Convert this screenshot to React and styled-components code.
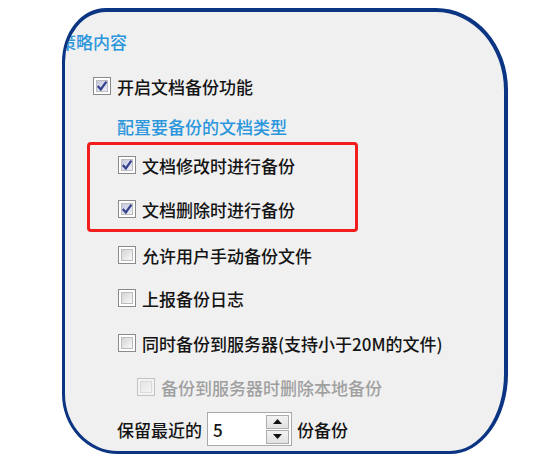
import React from 'react';
import styled, { createGlobalStyle } from 'styled-components';

const GlobalStyle = createGlobalStyle`
  html, body {
    margin: 0;
    padding: 0;
    background: #ffffff;
  }
  body {
    font-family: 'Noto Sans CJK SC', 'Noto Sans', 'Liberation Sans', sans-serif;
  }
`;

const Page = styled.div`
  width: 556px;
  height: 469px;
  box-sizing: border-box;
  padding: 8px 0 0 62px;
  overflow: hidden;
`;

const Panel = styled.div`
  width: 446px;
  height: 446px;
  box-sizing: border-box;
  background: #f0f0f0;
  border-style: solid;
  border-color: #0b3583;
  border-width: 4px 4px 3px 3px;
  border-top-left-radius: 44px 54px;
  border-top-right-radius: 72px 82px;
  border-bottom-right-radius: 58px 80px;
  border-bottom-left-radius: 56px 60px;
  overflow: hidden;
  padding: 19px 0 0 28px;
  display: flex;
  flex-direction: column;
  align-items: flex-start;
`;

const Heading = styled.div`
  font-size: 17px;
  font-weight: 500;
  line-height: 22px;
  height: 22px;
  color: #2b96dc;
  margin-left: ${p => p.$indent || 0}px;
  margin-top: ${p => p.$top || 0}px;
  white-space: nowrap;
`;

const Row = styled.div`
  display: flex;
  align-items: center;
  gap: ${p => p.$gap || 6}px;
  height: ${p => p.$height || 22}px;
  margin-top: ${p => p.$top || 0}px;
  margin-left: ${p => p.$indent || 0}px;
  font-size: 17px;
  font-weight: 500;
  color: ${p => (p.$disabled ? '#a0a0a0' : '#141414')};
  white-space: nowrap;
`;

const Box = styled.span`
  position: relative;
  width: 18px;
  height: 18px;
  box-sizing: border-box;
  border: 1px solid ${p => (p.$disabled ? '#c2c2c2' : '#8a8a8a')};
  background: ${p => (p.$disabled ? '#f3f3f3' : '#ffffff')};
  display: flex;
  align-items: center;
  justify-content: center;
  flex-shrink: 0;

  &::before {
    content: '';
    position: absolute;
    inset: 2px;
    background: ${p =>
      p.$disabled
        ? 'linear-gradient(135deg, #e4e4e4, #f6f6f6)'
        : p.$checked
        ? 'linear-gradient(135deg, #c6c8df, #eeeff6)'
        : 'linear-gradient(135deg, #d4d4d4, #f8f8f8)'};
    border: 1px solid ${p => (p.$disabled ? '#dadada' : '#bcbcbc')};
  }

  svg {
    position: relative;
  }
`;

const RedFrame = styled.div`
  margin-top: 4px;
  margin-left: -6px;
  width: 271px;
  height: 90px;
  box-sizing: border-box;
  border: 3px solid #f21d1d;
  border-radius: 4px;
  padding: 9px 0 0 28px;
  display: flex;
  flex-direction: column;
`;

const Spin = styled.div`
  display: flex;
  align-items: center;
  width: 85px;
  height: 34px;
  box-sizing: border-box;
  border: 1px solid #a9a9a9;
  background: #ffffff;
  padding: 0 2px 0 5px;
`;

const SpinValue = styled.span`
  flex: 1;
  font-size: 17px;
  color: #141414;
`;

const SpinButtons = styled.div`
  display: flex;
  flex-direction: column;
  gap: 1px;
  width: 23px;
`;

const SpinBtn = styled.div`
  height: 14px;
  box-sizing: border-box;
  border: 1px solid #adadad;
  background: linear-gradient(#f2f2f2, #e2e2e2);
  display: flex;
  align-items: center;
  justify-content: center;
`;

const Check = ({ checked, disabled }) => (
  <Box $checked={checked} $disabled={disabled}>
    {checked && (
      <svg width="12" height="12" viewBox="0 0 12 12">
        <path d="M1.8 6 L4.8 9.4 L10.4 1.6" fill="none" stroke="#34418f" strokeWidth="2.2" />
      </svg>
    )}
  </Box>
);

const Option = ({ label, checked, disabled, top, indent }) => (
  <Row $top={top} $indent={indent} $disabled={disabled}>
    <Check checked={checked} disabled={disabled} />
    <span>{label}</span>
  </Row>
);

const Arrow = ({ up }) => (
  <svg width="9" height="5" viewBox="0 0 9 5">
    <path d={up ? 'M0 5 L4.5 0 L9 5 Z' : 'M0 0 L4.5 5 L9 0 Z'} fill="#111" />
  </svg>
);

export default function App() {
  return (
    <Page>
      <GlobalStyle />
      <Panel>
        <Heading $indent={-34}>策略内容</Heading>
        <Option label="开启文档备份功能" checked top={22} />
        <Heading $indent={24} $top={19}>配置要备份的文档类型</Heading>
        <RedFrame>
          <Option label="文档修改时进行备份" checked />
          <Option label="文档删除时进行备份" checked top={22} />
        </RedFrame>
        <Option label="允许用户手动备份文件" top={12} indent={25} />
        <Option label="上报备份日志" top={21} indent={25} />
        <Option label="同时备份到服务器(支持小于20M的文件)" top={23} indent={25} />
        <Option label="备份到服务器时删除本地备份" disabled top={22} indent={44} />
        <Row $top={14} $indent={24} $height={34} $gap={5}>
          <span>保留最近的</span>
          <Spin>
            <SpinValue>5</SpinValue>
            <SpinButtons>
              <SpinBtn><Arrow up /></SpinBtn>
              <SpinBtn><Arrow /></SpinBtn>
            </SpinButtons>
          </Spin>
          <span>份备份</span>
        </Row>
      </Panel>
    </Page>
  );
}
